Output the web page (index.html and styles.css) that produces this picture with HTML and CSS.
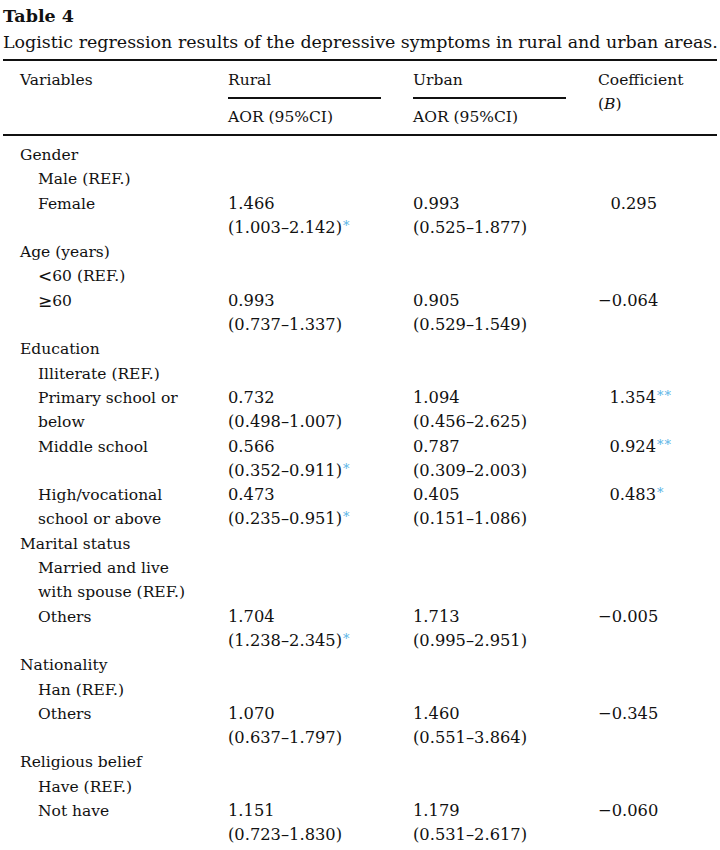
FILE: index.html
```html
<!DOCTYPE html>
<html>
<head>
<meta charset="utf-8">
<link rel="stylesheet" href="styles.css">
</head>
<body>
<div class="page">
  <div class="title">Table 4</div>
  <div class="caption">Logistic regression results of the depressive symptoms in rural and urban areas.</div>
  <div class="table">
    <div class="head">
      <div class="h-var">Variables</div>
      <div class="h-grp"><div class="h-name">Rural</div><div class="h-sub">AOR (95%CI)</div></div>
      <div class="h-grp"><div class="h-name">Urban</div><div class="h-sub">AOR (95%CI)</div></div>
      <div class="h-coef">Coefficient<br>(<i>B</i>)</div>
    </div>
    <div class="body">
      <div class="row"><div class="var">Gender</div></div>
      <div class="row"><div class="var sub">Male (REF.)</div></div>
      <div class="row"><div class="var sub">Female</div><div class="val">1.466<br>(1.003–2.142)<span class="sig">*</span></div><div class="val">0.993<br>(0.525–1.877)</div><div class="coef">0.295</div></div>
      <div class="row"><div class="var">Age (years)</div></div>
      <div class="row"><div class="var sub"><span class="math">&lt;</span>60 (REF.)</div></div>
      <div class="row"><div class="var sub"><span class="math">≥</span>60</div><div class="val">0.993<br>(0.737–1.337)</div><div class="val">0.905<br>(0.529–1.549)</div><div class="coef">−0.064</div></div>
      <div class="row"><div class="var">Education</div></div>
      <div class="row"><div class="var sub">Illiterate (REF.)</div></div>
      <div class="row"><div class="var sub">Primary school or<br>below</div><div class="val">0.732<br>(0.498–1.007)</div><div class="val">1.094<br>(0.456–2.625)</div><div class="coef">1.354<span class="sig">**</span></div></div>
      <div class="row"><div class="var sub">Middle school</div><div class="val">0.566<br>(0.352–0.911)<span class="sig">*</span></div><div class="val">0.787<br>(0.309–2.003)</div><div class="coef">0.924<span class="sig">**</span></div></div>
      <div class="row"><div class="var sub">High/vocational<br>school or above</div><div class="val">0.473<br>(0.235–0.951)<span class="sig">*</span></div><div class="val">0.405<br>(0.151–1.086)</div><div class="coef">0.483<span class="sig">*</span></div></div>
      <div class="row"><div class="var">Marital status</div></div>
      <div class="row"><div class="var sub">Married and live<br>with spouse (REF.)</div></div>
      <div class="row"><div class="var sub">Others</div><div class="val">1.704<br>(1.238–2.345)<span class="sig">*</span></div><div class="val">1.713<br>(0.995–2.951)</div><div class="coef">−0.005</div></div>
      <div class="row"><div class="var">Nationality</div></div>
      <div class="row"><div class="var sub">Han (REF.)</div></div>
      <div class="row"><div class="var sub">Others</div><div class="val">1.070<br>(0.637–1.797)</div><div class="val">1.460<br>(0.551–3.864)</div><div class="coef">−0.345</div></div>
      <div class="row"><div class="var">Religious belief</div></div>
      <div class="row"><div class="var sub">Have (REF.)</div></div>
      <div class="row"><div class="var sub">Not have</div><div class="val">1.151<br>(0.723–1.830)</div><div class="val">1.179<br>(0.531–2.617)</div><div class="coef">−0.060</div></div>
    </div>
  </div>
</div>
</body>
</html>
```
FILE: styles.css
```css
html, body {
  margin: 0;
  padding: 0;
  background: #ffffff;
}
body {
  font-family: "DejaVu Serif", "Liberation Serif", serif;
  color: #111111;
}
.page {
  padding: 3px 3px 0 3px;
}
.title {
  font-weight: bold;
  font-size: 17.5px;
  line-height: 26px;
}
.caption {
  font-size: 17.45px;
  line-height: 26px;
  white-space: nowrap;
}
.table {
  margin-top: 4px;
  border-top: 2px solid #111111;
  font-size: 15.5px;
}
.head {
  display: grid;
  grid-template-columns: 225px 185px 185px 1fr;
  padding: 7px 0 5px 0;
  border-bottom: 2px solid #111111;
  line-height: 24px;
}
.h-var {
  padding-left: 17px;
}
.h-name {
  width: 153px;
  padding-bottom: 5px;
  border-bottom: 2px solid #111111;
}
.h-sub {
  padding-top: 6px;
}
.body {
  padding-top: 7px;
  line-height: 24.3px;
}
.row {
  display: grid;
  grid-template-columns: 225px 185px 185px 1fr;
}
.var {
  padding-left: 17px;
  white-space: nowrap;
}
.var.sub {
  padding-left: 35px;
}
.math {
  font-family: "DejaVu Sans", sans-serif;
  font-size: 17px;
  line-height: 1;
  vertical-align: -1px;
}
.val {
  white-space: nowrap;
  font-size: 16.3px;
}
.coef {
  width: 59px;
  text-align: right;
  white-space: nowrap;
  font-size: 16.3px;
}
.sig {
  display: inline-block;
  width: 0;
  white-space: nowrap;
  color: #5ab4e6;
  font-size: 13px;
  letter-spacing: 1px;
  padding-left: 1px;
  line-height: 1;
  vertical-align: 3px;
}
```
